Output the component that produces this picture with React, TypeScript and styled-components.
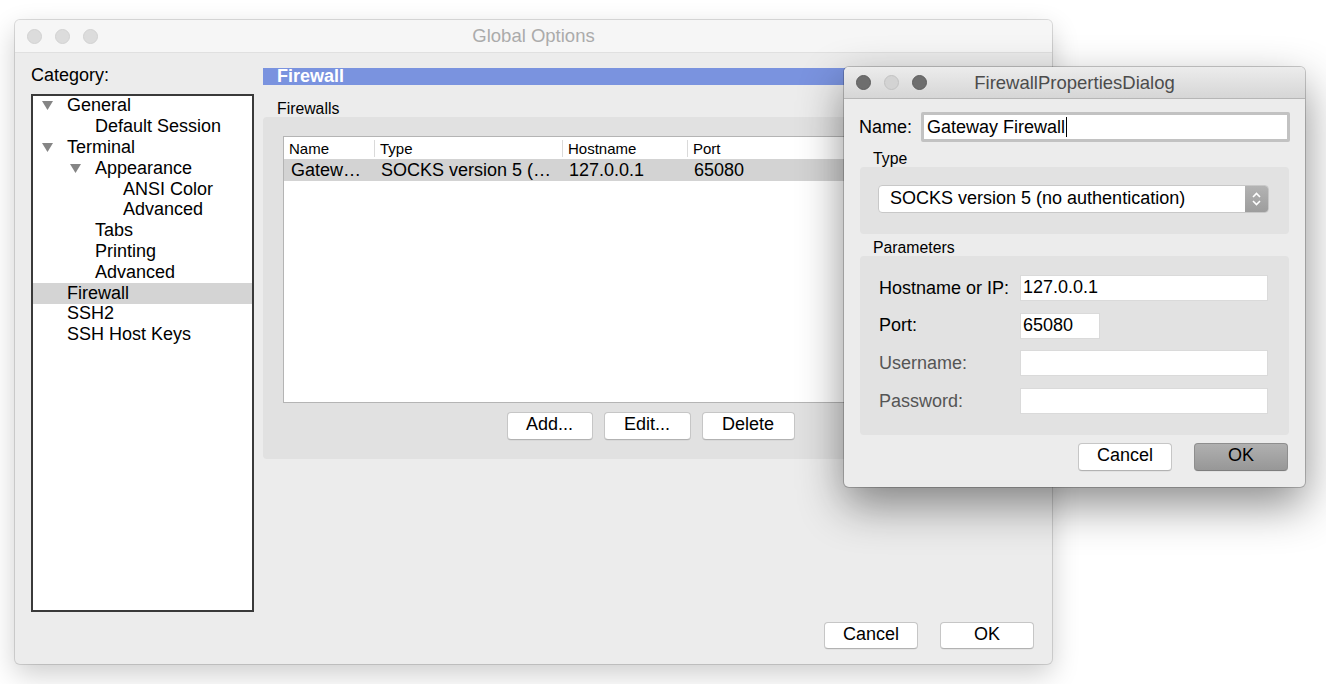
import React from "react";
import styled, { createGlobalStyle } from "styled-components";

const Global = createGlobalStyle`
  html, body { margin: 0; padding: 0; background: #ffffff; }
  body {
    width: 1326px; height: 684px; overflow: hidden;
    font-family: "Liberation Sans", Arial, Helvetica, sans-serif;
    color: #000;
  }
  * { box-sizing: border-box; }
`;

const Desktop = styled.div`
  position: relative;
  width: 1326px;
  height: 684px;
  background: #ffffff;
  overflow: hidden;
`;

/* ---------- Main window ---------- */
const MainWindow = styled.div`
  position: absolute;
  left: 15px;
  top: 20px;
  width: 1037px;
  height: 644px;
  display: flex;
  flex-direction: column;
  background: #ececec;
  border-radius: 5px;
  box-shadow: 0 0 0 1px rgba(0, 0, 0, 0.13), 0 10px 28px rgba(0, 0, 0, 0.2);
  overflow: hidden;
`;

const TitleBar = styled.div<{ $active?: boolean }>`
  flex: none;
  height: ${(p) => (p.$active ? 32 : 33)}px;
  display: grid;
  grid-template-columns: 1fr auto 1fr;
  align-items: center;
  background: ${(p) =>
    p.$active ? "linear-gradient(#ececec, #d6d6d6)" : "#f6f6f6"};
  border-bottom: 1px solid ${(p) => (p.$active ? "#b6b6b6" : "#e0e0e0")};
`;

const Lights = styled.div`
  display: flex;
  gap: 13px;
  padding-left: 12px;
`;

const Light = styled.span<{ $tone: "off" | "dark" | "light" }>`
  width: 15px;
  height: 15px;
  border-radius: 50%;
  background: ${(p) =>
    p.$tone === "dark" ? "#6e6e6e" : p.$tone === "light" ? "#d3d3d3" : "#dcdcdc"};
  border: 1px solid
    ${(p) => (p.$tone === "dark" ? "#5e5e5e" : p.$tone === "light" ? "#c2c2c2" : "#d2d2d2")};
`;

const WindowTitle = styled.div<{ $active?: boolean }>`
  font-size: 18.5px;
  color: ${(p) => (p.$active ? "#4c4c4c" : "#ababab")};
  white-space: nowrap;
`;

const Body = styled.div`
  flex: 1;
  display: flex;
  flex-direction: column;
  padding: 12px 8px 15px 16px;
`;

const Columns = styled.div`
  display: flex;
  gap: 9px;
`;

const LeftCol = styled.div`
  width: 223px;
  flex: none;
  display: flex;
  flex-direction: column;
`;

const CategoryLabel = styled.div`
  font-size: 18px;
  line-height: 20px;
  margin-bottom: 9px;
`;

const Tree = styled.div`
  height: 518px;
  background: #ffffff;
  border: 2px solid #3a3a3a;
  display: flex;
  flex-direction: column;
`;

const TreeRow = styled.div<{ $level: number; $selected?: boolean }>`
  height: 20.8px;
  flex: none;
  display: flex;
  align-items: center;
  padding-left: ${(p) => 9 + p.$level * 28}px;
  padding-bottom: 1px;
  background: ${(p) => (p.$selected ? "#d4d4d4" : "transparent")};
  font-size: 18px;
  white-space: nowrap;
`;

const ArrowSlot = styled.span`
  width: 25px;
  flex: none;
  display: flex;
  align-items: center;
`;

const RightCol = styled.div`
  width: 781px;
  flex: none;
  display: flex;
  flex-direction: column;
  padding-top: 3px;
`;

const SectionHeader = styled.div`
  height: 17px;
  line-height: 17px;
  background: #7a93df;
  color: #ffffff;
  font-weight: bold;
  font-size: 18px;
  padding-left: 14px;
`;

const GroupLabel = styled.div<{ $top: number; $indent: number }>`
  margin-top: ${(p) => p.$top}px;
  padding-left: ${(p) => p.$indent}px;
  font-size: 15.8px;
  line-height: 16px;
`;

const GroupBox = styled.div`
  height: 342px;
  background: #e1e1e1;
  border-radius: 4px;
  padding: 19px 20px 19px 20px;
  display: flex;
  flex-direction: column;
`;

const Table = styled.div`
  height: 267px;
  background: #ffffff;
  border: 1px solid #b4b4b4;
  display: flex;
  flex-direction: column;
`;

const HeaderRow = styled.div`
  height: 22px;
  display: flex;
  align-items: center;
`;

const HeaderCell = styled.div<{ $w?: number; $first?: boolean }>`
  width: ${(p) => (p.$w ? `${p.$w}px` : "auto")};
  flex: ${(p) => (p.$w ? "none" : "1")};
  height: 17px;
  line-height: 17px;
  font-size: 15px;
  padding-left: 5px;
  border-left: ${(p) => (p.$first ? "none" : "1px solid #dadada")};
  white-space: nowrap;
`;

const DataRow = styled.div`
  height: 22px;
  display: flex;
  align-items: center;
  background: #d3d3d3;
`;

const DataCell = styled.div<{ $w?: number }>`
  width: ${(p) => (p.$w ? `${p.$w}px` : "auto")};
  flex: ${(p) => (p.$w ? "none" : "1")};
  font-size: 18px;
  line-height: 22px;
  padding-left: 7px;
  white-space: nowrap;
  overflow: hidden;
`;

const ButtonRow = styled.div`
  margin-top: 9px;
  display: flex;
  justify-content: center;
  gap: 11px;
  padding-right: 6px;
`;

const PushButton = styled.button<{ $w: number; $h?: number; $default?: boolean }>`
  width: ${(p) => p.$w}px;
  height: ${(p) => p.$h ?? 28}px;
  padding: 0 0 3px;
  font-family: "Liberation Sans", Arial, sans-serif;
  font-size: 18px;
  color: #000;
  border-radius: 4px;
  border: 1px solid ${(p) => (p.$default ? "#8e8e8e" : "#c6c6c6")};
  border-bottom-color: ${(p) => (p.$default ? "#7e7e7e" : "#b2b2b2")};
  background: ${(p) =>
    p.$default ? "linear-gradient(#b0b0b0, #979797)" : "#ffffff"};
  box-shadow: 0 0.5px 0.5px rgba(0, 0, 0, 0.08);
`;

const Footer = styled.div<{ $top?: number; $right: number }>`
  margin-top: ${(p) => (p.$top !== undefined ? `${p.$top}px` : "auto")};
  display: flex;
  justify-content: flex-end;
  gap: 22px;
  padding-right: ${(p) => p.$right}px;
`;

/* ---------- Dialog ---------- */
const Dialog = styled.div`
  position: absolute;
  left: 844px;
  top: 67px;
  width: 461px;
  height: 420px;
  display: flex;
  flex-direction: column;
  background: #ececec;
  border-radius: 5px;
  box-shadow: 0 0 0 1px rgba(0, 0, 0, 0.2), 0 18px 45px rgba(0, 0, 0, 0.45);
  overflow: hidden;
`;

const DialogBody = styled.div`
  flex: 1;
  display: flex;
  flex-direction: column;
  padding: 13px 15px 16px 15px;
`;

const NameRow = styled.div`
  display: flex;
  align-items: center;
  gap: 9px;
`;

const FieldLabel = styled.div<{ $dim?: boolean }>`
  font-size: 18px;
  color: ${(p) => (p.$dim ? "#555555" : "#000")};
  white-space: nowrap;
`;

const NameInput = styled.div`
  flex: 1;
  height: 30px;
  background: #ffffff;
  border: 3px solid #c2c2c2;
  border-radius: 2px;
  display: flex;
  align-items: center;
  padding-left: 3px;
  font-size: 18px;
`;

const Caret = styled.span`
  display: inline-block;
  width: 1px;
  height: 20px;
  background: #000;
  margin-left: 1px;
`;

const DGroup = styled.div<{ $pad: string }>`
  margin: 0 1px;
  background: #e2e2e2;
  border-radius: 4px;
  padding: ${(p) => p.$pad};
`;

const Select = styled.div`
  height: 28px;
  display: flex;
  background: #ffffff;
  border: 1px solid #c8c8c8;
  border-radius: 4px;
  overflow: hidden;
`;

const SelectText = styled.div`
  flex: 1;
  font-size: 18px;
  line-height: 25px;
  padding-left: 11px;
  white-space: nowrap;
`;

const Stepper = styled.div`
  width: 23px;
  flex: none;
  background: linear-gradient(#b3b3b3, #9d9d9d);
  display: flex;
  align-items: center;
  justify-content: center;
`;

const ParamGrid = styled.div`
  display: grid;
  grid-template-columns: 141px 1fr;
  row-gap: 11.7px;
  align-items: center;
`;

const TextField = styled.div<{ $w?: number }>`
  width: ${(p) => (p.$w ? `${p.$w}px` : "100%")};
  height: 26px;
  background: #ffffff;
  border: 1px solid #dadada;
  font-size: 18px;
  line-height: 22px;
  padding-left: 2px;
`;

const TriangleDown = () => (
  <svg width="11" height="9" viewBox="0 0 11 9">
    <path d="M0 0 H11 L5.5 9 Z" fill="#858585" />
  </svg>
);

const StepperIcon = () => (
  <svg width="11" height="18" viewBox="0 0 11 18">
    <path d="M2 7 L5.5 3.5 L9 7" fill="none" stroke="#ffffff" strokeWidth="1.6" />
    <path d="M2 11 L5.5 14.5 L9 11" fill="none" stroke="#ffffff" strokeWidth="1.6" />
  </svg>
);

type Node = { label: string; level: number; arrow?: boolean; selected?: boolean };

const tree: Node[] = [
  { label: "General", level: 0, arrow: true },
  { label: "Default Session", level: 1 },
  { label: "Terminal", level: 0, arrow: true },
  { label: "Appearance", level: 1, arrow: true },
  { label: "ANSI Color", level: 2 },
  { label: "Advanced", level: 2 },
  { label: "Tabs", level: 1 },
  { label: "Printing", level: 1 },
  { label: "Advanced", level: 1 },
  { label: "Firewall", level: 0, selected: true },
  { label: "SSH2", level: 0 },
  { label: "SSH Host Keys", level: 0 },
];

const cols = [
  { title: "Name", w: 90, value: "Gatew…" },
  { title: "Type", w: 188, value: "SOCKS version 5 (…" },
  { title: "Hostname", w: 125, value: "127.0.0.1" },
  { title: "Port", w: 0, value: "65080" },
];

export default function App() {
  return (
    <Desktop>
      <Global />
      <MainWindow>
        <TitleBar>
          <Lights>
            <Light $tone="off" />
            <Light $tone="off" />
            <Light $tone="off" />
          </Lights>
          <WindowTitle>Global Options</WindowTitle>
          <div />
        </TitleBar>
        <Body>
          <Columns>
            <LeftCol>
              <CategoryLabel>Category:</CategoryLabel>
              <Tree>
                {tree.map((n, i) => (
                  <TreeRow key={i} $level={n.level} $selected={n.selected}>
                    <ArrowSlot>{n.arrow && <TriangleDown />}</ArrowSlot>
                    {n.label}
                  </TreeRow>
                ))}
              </Tree>
            </LeftCol>
            <RightCol>
              <SectionHeader>Firewall</SectionHeader>
              <GroupLabel $top={16} $indent={14}>Firewalls</GroupLabel>
              <GroupBox>
                <Table>
                  <HeaderRow>
                    {cols.map((c, i) => (
                      <HeaderCell key={c.title} $w={c.w || undefined} $first={i === 0}>
                        {c.title}
                      </HeaderCell>
                    ))}
                  </HeaderRow>
                  <DataRow>
                    {cols.map((c) => (
                      <DataCell key={c.title} $w={c.w || undefined}>
                        {c.value}
                      </DataCell>
                    ))}
                  </DataRow>
                </Table>
                <ButtonRow>
                  <PushButton $w={86}>Add...</PushButton>
                  <PushButton $w={87}>Edit...</PushButton>
                  <PushButton $w={93}>Delete</PushButton>
                </ButtonRow>
              </GroupBox>
            </RightCol>
          </Columns>
          <Footer $right={10}>
            <PushButton $w={94} $h={27}>Cancel</PushButton>
            <PushButton $w={94} $h={27}>OK</PushButton>
          </Footer>
        </Body>
      </MainWindow>

      <Dialog>
        <TitleBar $active>
          <Lights>
            <Light $tone="dark" />
            <Light $tone="light" />
            <Light $tone="dark" />
          </Lights>
          <WindowTitle $active>FirewallPropertiesDialog</WindowTitle>
          <div />
        </TitleBar>
        <DialogBody>
          <NameRow>
            <FieldLabel>Name:</FieldLabel>
            <NameInput>
              Gateway Firewall
              <Caret />
            </NameInput>
          </NameRow>
          <GroupLabel $top={9} $indent={14}>Type</GroupLabel>
          <DGroup $pad="18px 20px 21px 18px">
            <Select>
              <SelectText>SOCKS version 5 (no authentication)</SelectText>
              <Stepper>
                <StepperIcon />
              </Stepper>
            </Select>
          </DGroup>
          <GroupLabel $top={6} $indent={14}>Parameters</GroupLabel>
          <DGroup $pad="19px 21px 21px 19px">
            <ParamGrid>
              <FieldLabel>Hostname or IP:</FieldLabel>
              <TextField>127.0.0.1</TextField>
              <FieldLabel>Port:</FieldLabel>
              <TextField $w={80}>65080</TextField>
              <FieldLabel $dim>Username:</FieldLabel>
              <TextField />
              <FieldLabel $dim>Password:</FieldLabel>
              <TextField />
            </ParamGrid>
          </DGroup>
          <Footer $top={8} $right={2}>
            <PushButton $w={94}>Cancel</PushButton>
            <PushButton $w={94} $default>OK</PushButton>
          </Footer>
        </DialogBody>
      </Dialog>
    </Desktop>
  );
}
